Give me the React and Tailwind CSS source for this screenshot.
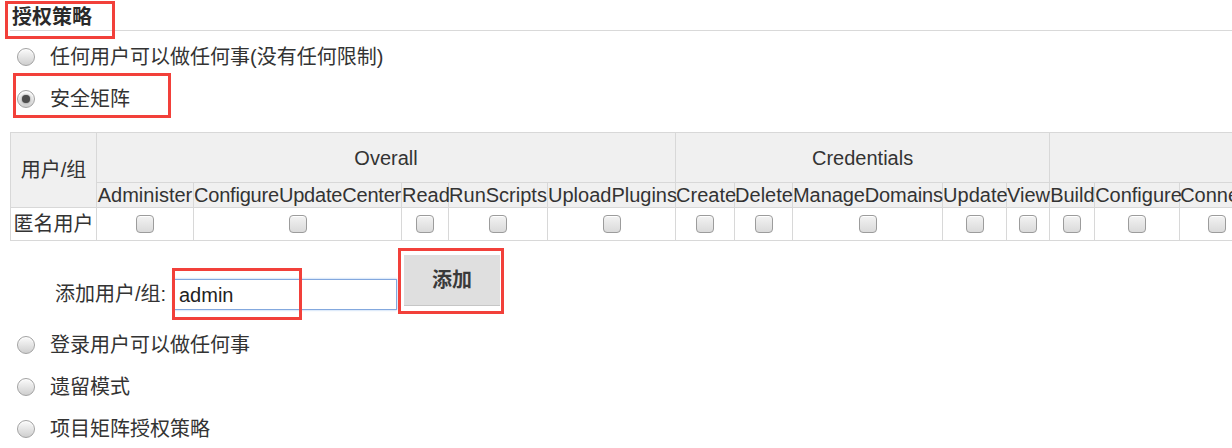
import React from "react";

const perms = [
  ["Administer", 97, ""],
  ["ConfigureUpdateCenter", 208, "tracking-[-0.2px]"],
  ["Read", 47, ""],
  ["RunScripts", 99, ""],
  ["UploadPlugins", 128, ""],
  ["Create", 59, ""],
  ["Delete", 58, ""],
  ["ManageDomains", 150, "tracking-[-0.1px]"],
  ["Update", 64, ""],
  ["View", 43, ""],
  ["Build", 45, ""],
  ["Configure", 85, ""],
  ["Connect", 75, ""],
  ["Create", 59, ""],
  ["Delete", 58, ""],
  ["Disconnect", 98, ""],
  ["Provision", 88, ""],
];

function Radio({ checked }) {
  return (
    <span className="flex h-[18px] w-[18px] shrink-0 items-center justify-center rounded-full border border-[#a2a2a2] bg-linear-to-b from-[#fbfbfb] to-[#cfcfcf] shadow-[inset_0_1px_1px_rgba(255,255,255,0.9)]">
      {checked && <span className="h-[8px] w-[8px] rounded-full bg-[#4d4d4d] shadow-[0_0_2px_#666]" />}
    </span>
  );
}

function Check() {
  return (
    <span className="mx-auto block h-[18px] w-[18px] rounded-[4px] border border-[#9c9c9c] bg-linear-to-b from-[#f3f3f3] to-[#dadada] shadow-[inset_0_1px_0_rgba(255,255,255,0.9)]" />
  );
}

function RadioRow({ checked, children }) {
  return (
    <div className="flex h-[42px] items-center pl-[7px]">
      <Radio checked={checked} />
      <span className="ml-[15px] text-[20px] leading-[24px]">{children}</span>
    </div>
  );
}

export default function App() {
  const tableWidth = 86 + perms.reduce((s, p) => s + p[1], 0);
  return (
    <div className="relative h-[448px] w-[1232px] overflow-hidden bg-white font-['Liberation_Sans','Noto_Sans_CJK_SC',sans-serif] text-[#333]">
      <div className="pl-[10px]">
        <div className="h-[31px] border-b border-[#d9d9d9] pl-[2px] pt-[5px] text-[20px] font-bold leading-[24px] text-[#2a2a2a]">
          授权策略
        </div>
        <div className="mt-[5px]">
          <RadioRow>任何用户可以做任何事(没有任何限制)</RadioRow>
          <RadioRow checked>安全矩阵</RadioRow>
        </div>

        <table
          className="mt-[12px] table-fixed border-collapse text-[20px] leading-[24px]"
          style={{ width: tableWidth }}
        >
          <colgroup>
            <col style={{ width: 86 }} />
            {perms.map((p, i) => (
              <col key={i} style={{ width: p[1] }} />
            ))}
          </colgroup>
          <thead>
            <tr className="h-[50px] bg-[#f0f0f0]">
              <th rowSpan={2} className="border border-[#d8d8d8] p-0 text-center font-normal">
                用户/组
              </th>
              <th colSpan={5} className="border border-[#d8d8d8] p-0 text-center font-normal">
                Overall
              </th>
              <th colSpan={5} className="border border-[#d8d8d8] p-0 text-center font-normal">
                Credentials
              </th>
              <th colSpan={7} className="border border-[#d8d8d8] p-0 text-center font-normal">
                Slave
              </th>
            </tr>
            <tr className="h-[25px] bg-[#f0f0f0]">
              {perms.map((p, i) => (
                <th
                  key={i}
                  className={`overflow-visible whitespace-nowrap border border-[#d8d8d8] p-0 text-center font-normal ${p[2]}`}
                >
                  {p[0]}
                </th>
              ))}
            </tr>
          </thead>
          <tbody>
            <tr className="h-[33px]">
              <td className="whitespace-nowrap border border-[#d8d8d8] p-0 text-center">匿名用户</td>
              {perms.map((p, i) => (
                <td key={i} className="border border-[#d8d8d8] p-0 text-center align-middle">
                  <Check />
                </td>
              ))}
            </tr>
          </tbody>
        </table>

        <div className="mt-[13px] flex items-start pl-[45px]">
          <span className="mt-[28px] w-[118px] whitespace-nowrap text-[20px] leading-[24px]">添加用户/组:</span>
          <div className="mt-[25px] flex h-[31px] w-[224px] items-center border border-[#83a8de] pl-[5px] text-[20px] text-[#222] shadow-[0_0_2px_#9cc0ee]">
            admin
          </div>
          <button className="ml-[7px] mt-[1px] h-[51px] w-[96px] border-b border-[#c6c6c6] bg-[#dfdfdf] text-[20px] font-bold leading-[24px] text-[#3a3a3a]">
            添加
          </button>
        </div>

        <div className="mt-[14px]">
          <RadioRow>登录用户可以做任何事</RadioRow>
          <RadioRow>遗留模式</RadioRow>
          <RadioRow>项目矩阵授权策略</RadioRow>
        </div>
      </div>

      <div className="pointer-events-none absolute left-[5px] top-[1px] h-[38px] w-[110px] border-[3px] border-[#f2403a]" />
      <div className="pointer-events-none absolute left-[13px] top-[73px] h-[45px] w-[158px] border-[3px] border-[#f2403a]" />
      <div className="pointer-events-none absolute left-[172px] top-[268px] h-[52px] w-[130px] border-[3px] border-[#f2403a]" />
      <div className="pointer-events-none absolute left-[398px] top-[248px] h-[66px] w-[106px] border-[3px] border-[#f2403a]" />
    </div>
  );
}
